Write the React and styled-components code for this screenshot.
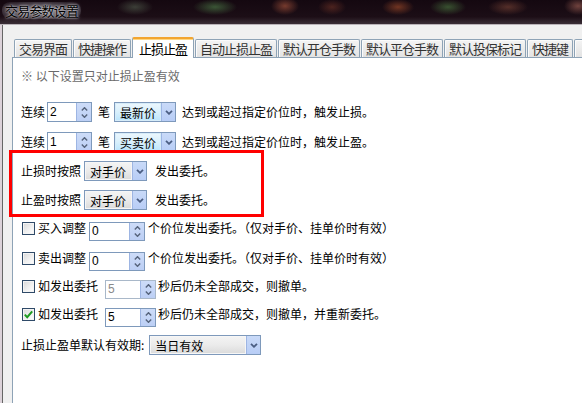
import React from 'react';
import styled, { createGlobalStyle } from 'styled-components';

const GlobalStyle = createGlobalStyle`
  html, body { margin: 0; padding: 0; background: #f0f0f0; }
  body { font-family: "Noto Sans CJK SC", "Noto Sans", sans-serif; }
`;

const Window = styled.div`
  width: 582px;
  height: 403px;
  overflow: hidden;
  display: flex;
  flex-direction: column;
  background: #f0f0f0;
  box-shadow: inset 2px 0 #dcd2d9;
  font-family: "Noto Sans CJK SC", "Noto Sans", sans-serif;
  font-size: 12px;
  color: #000;
`;

const TitleBar = styled.div`
  flex: none;
  height: 24px;
  border-bottom: 1px solid #b9b3b8;
  display: flex;
  align-items: center;
  padding-left: 2px;
  background:
    radial-gradient(ellipse 18px 8px at 135px 7px, rgba(90, 105, 85, 0.55), transparent),
    radial-gradient(ellipse 22px 8px at 215px 7px, rgba(70, 110, 65, 0.75), transparent),
    radial-gradient(ellipse 14px 9px at 285px 6px, rgba(150, 75, 55, 0.75), transparent),
    radial-gradient(ellipse 14px 8px at 332px 7px, rgba(120, 55, 40, 0.55), transparent),
    radial-gradient(ellipse 16px 8px at 398px 7px, rgba(150, 70, 40, 0.7), transparent),
    radial-gradient(ellipse 18px 8px at 448px 7px, rgba(70, 110, 60, 0.7), transparent),
    radial-gradient(ellipse 20px 8px at 508px 7px, rgba(125, 70, 55, 0.6), transparent),
    radial-gradient(ellipse 14px 9px at 578px 6px, rgba(150, 90, 80, 0.7), transparent),
    linear-gradient(#140810, #1c0e16 70%, #3a2e36);
`;

/* Aero-style caption: dark glyphs on a soft pale halo */
const Title = styled.span`
  margin-top: -4px;
  padding: 1px 3px;
  font-size: 13px;
  line-height: 15px;
  letter-spacing: -0.8px;
  color: #000;
  border-radius: 8px;
  background: radial-gradient(ellipse at center, rgba(175, 172, 180, 0.75), rgba(120, 115, 125, 0.35) 70%, transparent);
  text-shadow: 0 0 2px rgba(235, 235, 240, 0.9), 0 0 4px rgba(220, 220, 228, 0.7);
  white-space: nowrap;
`;

const Frame = styled.div`
  flex: 1;
  min-height: 0;
  display: flex;
  flex-direction: column;
  margin-left: 2px;
  border-left: 1px solid #666;
  padding-left: 9px;
`;

const TabStrip = styled.div`
  flex: none;
  position: relative;
  z-index: 1;
  display: flex;
  align-items: flex-end;
  gap: 1px;
  height: 20px;
  margin-top: 12px;
  padding-left: 2px;
`;

const Tab = styled.div`
  flex: none;
  box-sizing: border-box;
  display: flex;
  align-items: center;
  min-width: ${p => (p.$stub ? 40 : 0)}px;
  height: ${p => (p.$active ? 21 : 18)}px;
  margin-bottom: ${p => (p.$active ? -1 : 0)}px;
  padding: 0 ${p => (p.$active ? 6 : 4)}px;
  border: 1px solid #8ea3b6;
  border-bottom: none;
  border-top: ${p => (p.$active ? '2px solid #f2a531' : '1px solid #8ea3b6')};
  border-radius: 2px 2px 0 0;
  background: ${p => (p.$active ? '#fff' : 'linear-gradient(#f4f4f4, #e3e3e3)')};
  box-shadow: ${p => (p.$active ? 'inset 0 1px #ffd680' : 'inset 1px 1px #fbfbfb')};
  color: ${p => (p.$active ? '#000' : '#333')};
  font-size: 13px;
  letter-spacing: -1px;
  line-height: 14px;
  white-space: nowrap;
`;

const Panel = styled.div`
  flex: 1;
  position: relative;
  display: flex;
  flex-direction: column;
  align-items: flex-start;
  background: #fff;
  border-top: 1px solid #8ea3b6;
  border-left: 1px solid #8ea3b6;
  padding-left: 8px;
`;

const Note = styled.div`
  margin-top: 11px;
  line-height: 14px;
  color: #6a6a6a;
  white-space: nowrap;
`;

const Row = styled.div`
  display: flex;
  align-items: ${p => (p.$top ? 'flex-start' : 'center')};
  height: 20px;
  margin-top: ${p => p.$mt || 0}px;
  white-space: nowrap;
`;

const Label = styled.span`
  margin-left: ${p => p.$ml || 0}px;
  line-height: ${p => p.$lh || 14}px;
  color: #000;
`;

/* Combo box */
const SelectBox = styled.div`
  box-sizing: border-box;
  display: flex;
  width: ${p => p.$w}px;
  height: 20px;
  margin-left: ${p => p.$ml || 0}px;
  border: 1px solid #7e99bb;
  background: #fff;
`;

const SelectValue = styled.div`
  flex: 1;
  padding-left: 4px;
  line-height: 18px;
  border: 1px solid ${p => (p.$tone === 'blue' ? '#d6ecf9' : '#f6f6f6')};
  background: ${p =>
    p.$tone === 'blue'
      ? 'linear-gradient(#eaf6fd, #d9f0fc 50%, #bee6fd)'
      : 'linear-gradient(#f3f3f3, #ebebeb 50%, #dcdcdc)'};
`;

const SelectArrow = styled.div`
  flex: none;
  box-sizing: border-box;
  width: 14px;
  display: flex;
  align-items: center;
  justify-content: center;
  border-left: 1px solid #9db5e3;
  background: linear-gradient(#c9daf8, #b8cdf6);
`;

const Chevron = () => (
  <svg width="8" height="5" viewBox="0 0 8 5">
    <path d="M1 0.8 L4 3.8 L7 0.8" fill="none" stroke="#4b5e82" strokeWidth="1.8" />
  </svg>
);

const Select = ({ w, ml, tone, children }) => (
  <SelectBox $w={w} $ml={ml}>
    <SelectValue $tone={tone}>{children}</SelectValue>
    <SelectArrow>
      <Chevron />
    </SelectArrow>
  </SelectBox>
);

/* Spin box */
const SpinBox = styled.div`
  box-sizing: border-box;
  display: flex;
  width: ${p => p.$w}px;
  height: ${p => p.$h || 20}px;
  margin-left: ${p => p.$ml || 0}px;
  border: 1px solid ${p => (p.$disabled ? '#a9b8c9' : '#7e99bb')};
  background: #fff;
`;

const SpinValue = styled.div`
  flex: 1;
  padding-left: 2px;
  font-family: "Liberation Sans", Arial, sans-serif;
  font-size: 12px;
  line-height: ${p => (p.$h || 20) - 2}px;
  color: ${p => (p.$disabled ? '#8a8a8a' : '#000')};
`;

const SpinButtons = styled.div`
  flex: none;
  box-sizing: border-box;
  width: 15px;
  display: flex;
  flex-direction: column;
  align-items: center;
  justify-content: center;
  gap: 3px;
  border-left: 1px solid #9db5e3;
  background: linear-gradient(#cddcf8, #bccff5);
`;

const SpinArrow = ({ down }) => (
  <svg width="7" height="4" viewBox="0 0 7 4">
    <path
      d={down ? 'M0.8 0.6 L3.5 3.3 L6.2 0.6' : 'M0.8 3.4 L3.5 0.7 L6.2 3.4'}
      fill="none"
      stroke="#56647c"
      strokeWidth="1.4"
    />
  </svg>
);

const Spinner = ({ w, h, ml, value, disabled }) => (
  <SpinBox $w={w} $h={h} $ml={ml} $disabled={disabled}>
    <SpinValue $h={h} $disabled={disabled}>{value}</SpinValue>
    <SpinButtons>
      <SpinArrow />
      <SpinArrow down />
    </SpinButtons>
  </SpinBox>
);

/* Check box */
const CheckBox = styled.span`
  flex: none;
  box-sizing: border-box;
  display: flex;
  align-items: center;
  justify-content: center;
  width: 13px;
  height: 13px;
  margin-left: 1px;
  border: 1px solid #2f4a68;
  box-shadow: inset 0 0 0 1px #f4f4f4;
  background: linear-gradient(135deg, #d8d8d8, #f2f2f2 60%, #fff);
`;

const Check = ({ checked }) => (
  <CheckBox>
    {checked && (
      <svg width="11" height="11" viewBox="0 0 11 11">
        <path d="M1.8 5.6 L4.2 8.2 L9.2 2.4" fill="none" stroke="#1e9b21" strokeWidth="2" />
      </svg>
    )}
  </CheckBox>
);

const Highlight = styled.div`
  position: absolute;
  left: -4px;
  top: 92px;
  width: 255px;
  height: 67px;
  box-sizing: border-box;
  border: 3px solid #ff0000;
  pointer-events: none;
`;

const tabs = [
  '交易界面',
  '快捷操作',
  '止损止盈',
  '自动止损止盈',
  '默认开仓手数',
  '默认平仓手数',
  '默认投保标记',
  '快捷键',
];

export default function App() {
  return (
    <>
      <GlobalStyle />
      <Window>
        <TitleBar>
          <Title>交易参数设置</Title>
        </TitleBar>
        <Frame>
          <TabStrip>
            {tabs.map(t => (
              <Tab key={t} $active={t === '止损止盈'}>
                {t}
              </Tab>
            ))}
            {/* next tab, scrolled past the right edge */}
            <Tab $stub />
          </TabStrip>
          <Panel>
            <Note>※ 以下设置只对止损止盈有效</Note>

            <Row $mt={19}>
              <Label>连续</Label>
              <Spinner w={45} ml={2} value="2" />
              <Label $ml={6}>笔</Label>
              <Select w={62} ml={4} tone="blue">最新价</Select>
              <Label $ml={6}>达到或超过指定价位时，触发止损。</Label>
            </Row>
            <Row $mt={10}>
              <Label>连续</Label>
              <Spinner w={45} ml={2} value="1" />
              <Label $ml={6}>笔</Label>
              <Select w={62} ml={4} tone="blue">买卖价</Select>
              <Label $ml={6}>达到或超过指定价位时，触发止盈。</Label>
            </Row>

            <Row $mt={9}>
              <Label>止损时按照</Label>
              <Select w={63} ml={3} tone="gray">对手价</Select>
              <Label $ml={8}>发出委托。</Label>
            </Row>
            <Row $mt={9}>
              <Label>止盈时按照</Label>
              <Select w={63} ml={3} tone="gray">对手价</Select>
              <Label $ml={8}>发出委托。</Label>
            </Row>

            <Row $mt={12} $top>
              <Check />
              <Label $ml={3} $lh={12}>买入调整</Label>
              <Spinner w={56} h={19} ml={3} value="0" />
              <Label $ml={3} $lh={12}>个价位发出委托。（仅对手价、挂单价时有效）</Label>
            </Row>
            <Row $mt={10} $top>
              <Check />
              <Label $ml={3} $lh={12}>卖出调整</Label>
              <Spinner w={56} h={19} ml={3} value="0" />
              <Label $ml={3} $lh={12}>个价位发出委托。（仅对手价、挂单价时有效）</Label>
            </Row>
            <Row $mt={8} $top>
              <Check />
              <Label $ml={3} $lh={12}>如发出委托</Label>
              <Spinner w={51} h={19} ml={7} value="5" disabled />
              <Label $ml={2} $lh={12}>秒后仍未全部成交，则撤单。</Label>
            </Row>
            <Row $mt={8} $top>
              <Check checked />
              <Label $ml={3} $lh={12}>如发出委托</Label>
              <Spinner w={51} h={19} ml={7} value="5" />
              <Label $ml={2} $lh={12}>秒后仍未全部成交，则撤单，并重新委托。</Label>
            </Row>

            <Row $mt={7}>
              <Label>止损止盈单默认有效期:</Label>
              <Select w={112} ml={5} tone="gray">当日有效</Select>
            </Row>

            <Highlight />
          </Panel>
        </Frame>
      </Window>
    </>
  );
}
